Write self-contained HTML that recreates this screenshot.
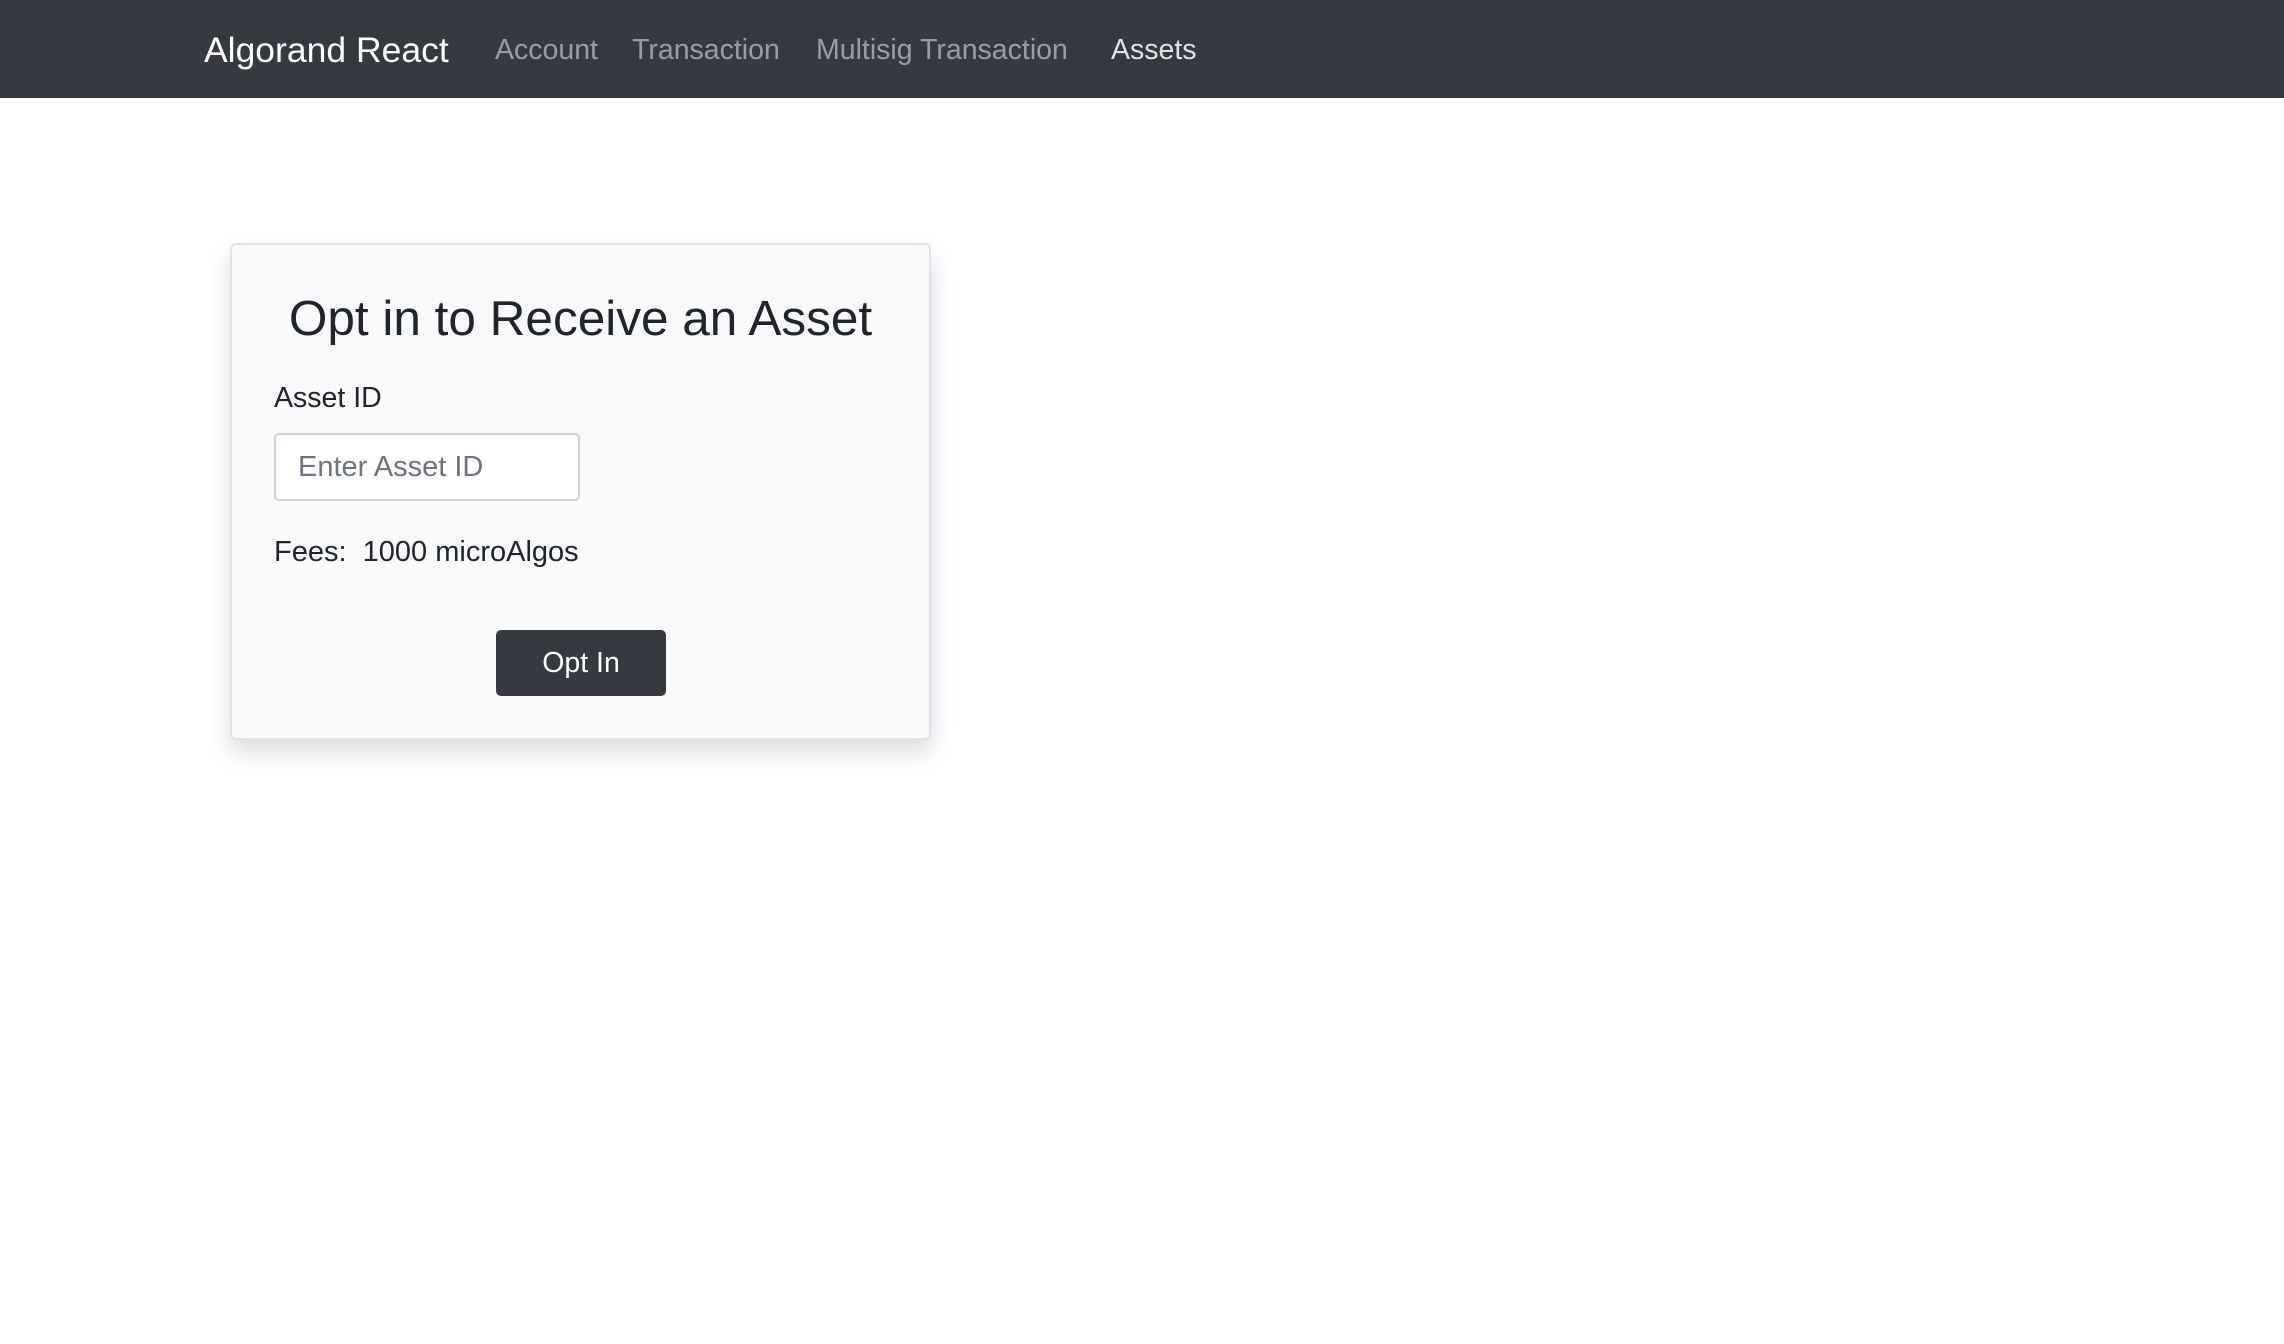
<!DOCTYPE html>
<html><head><meta charset="utf-8"><style>
*{box-sizing:border-box;margin:0;padding:0}
body{width:2284px;height:1344px;background:#fff;font-family:"Liberation Sans",sans-serif;color:#212529;position:relative;overflow:hidden}
.nav{position:absolute;left:0;top:0;width:2284px;height:98px;background:#343a40}
.nav span{position:absolute;top:1px;line-height:98px;white-space:nowrap}
.brand{left:204px;font-size:35.5px;color:#fff}
.l{font-size:28.5px;color:rgba(255,255,255,.5)}
.card{position:absolute;left:230px;top:243px;width:701px;height:497px;background:#f8f9fa;border:2px solid #dee2e6;border-radius:6px;box-shadow:0 12px 24px rgba(0,0,0,.15)}
.t{position:absolute;white-space:nowrap}
h2{position:absolute;left:0;width:697px;text-align:center;top:289px;font-size:49.5px;font-weight:400;line-height:60px}
.input{position:absolute;left:274px;top:433px;width:306px;height:68px;background:#fff;border:2px solid #ced4da;border-radius:5px;font-size:29px;color:#6c757d;line-height:64px;padding-left:22px}
.btn{position:absolute;left:496px;top:630px;width:170px;height:66px;background:#343a40;border-radius:5px;color:#fff;font-size:28.5px;line-height:66px;text-align:center}
</style></head><body>
<div class="nav">
<span class="brand">Algorand React</span>
<span class="l" style="left:495px">Account</span>
<span class="l" style="left:632px">Transaction</span>
<span class="l" style="left:816px">Multisig Transaction</span>
<span class="l" style="left:1111px;color:rgba(255,255,255,.85)">Assets</span>
</div>
<div class="card"></div>
<h2 style="left:230px;width:701px">Opt in to Receive an Asset</h2>
<div class="t" style="left:274px;top:380px;font-size:28.5px;line-height:36px">Asset ID</div>
<div class="input">Enter Asset ID</div>
<div class="t" style="left:274px;top:534px;font-size:29px;line-height:36px">Fees:&nbsp; 1000 microAlgos</div>
<div class="btn">Opt In</div>
</body></html>
